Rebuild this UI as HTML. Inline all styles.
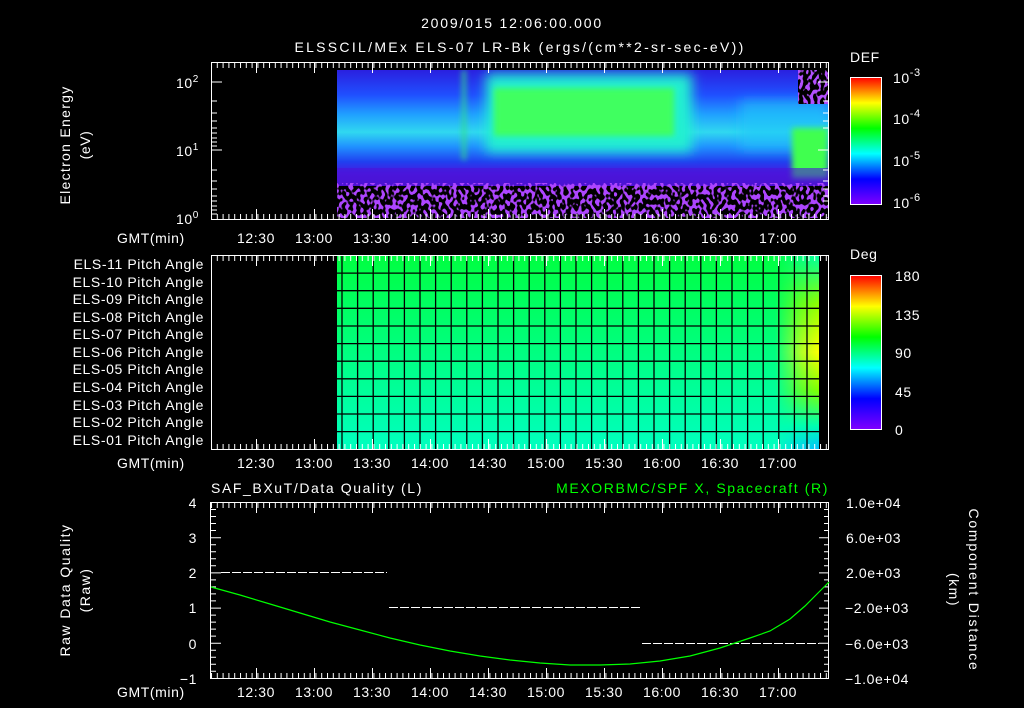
<!DOCTYPE html>
<html><head><meta charset="utf-8"><style>
html,body{margin:0;padding:0;background:#000;width:1024px;height:708px;overflow:hidden}
svg{display:block}
text{font-family:"Liberation Sans",sans-serif;fill:#fff;font-size:14px;letter-spacing:0.6px}
</style></head><body>
<svg width="1024" height="708" viewBox="0 0 1024 708" xmlns="http://www.w3.org/2000/svg">
<defs>
<pattern id="tk" patternUnits="userSpaceOnUse" x="211" y="0" width="5.8" height="10"><rect x="0" y="0" width="1" height="10" fill="#fff"/></pattern>
<pattern id="tkM" patternUnits="userSpaceOnUse" x="256" y="0" width="58" height="20"><rect x="0" y="0" width="1" height="20" fill="#fff"/></pattern>
<linearGradient id="spec" x1="0" y1="0" x2="0" y2="1">
<stop offset="0" stop-color="#2a20e0"/><stop offset="0.17" stop-color="#2050ff"/><stop offset="0.3" stop-color="#20a0ff"/><stop offset="0.42" stop-color="#30d8f0"/><stop offset="0.52" stop-color="#2090ff"/><stop offset="0.62" stop-color="#2040f0"/><stop offset="0.7" stop-color="#4a18e0"/><stop offset="0.78" stop-color="#5010c8"/><stop offset="1" stop-color="#1c0050"/>
</linearGradient>
<linearGradient id="cbTop" x1="0" y1="1" x2="0" y2="0">
<stop offset="0" stop-color="#8000ff"/><stop offset="0.2" stop-color="#0000ff"/><stop offset="0.4" stop-color="#00ffff"/><stop offset="0.6" stop-color="#00ff00"/><stop offset="0.8" stop-color="#ffff00"/><stop offset="1" stop-color="#ff0000"/>
</linearGradient>
<linearGradient id="pa" x1="0" y1="0" x2="0" y2="1"><stop offset="0" stop-color="#00ff40"/><stop offset="1" stop-color="#00ffc0"/></linearGradient>
<linearGradient id="paR" x1="0" y1="0" x2="0" y2="1"><stop offset="0" stop-color="#00ffa0"/><stop offset="0.25" stop-color="#90ff00"/><stop offset="0.5" stop-color="#ffff00"/><stop offset="0.7" stop-color="#80ff00"/><stop offset="0.88" stop-color="#00ffb0"/><stop offset="1" stop-color="#00c0ff"/></linearGradient>
<linearGradient id="fadeH" x1="0" y1="0" x2="1" y2="0"><stop offset="0" stop-color="#fff" stop-opacity="0"/><stop offset="0.6" stop-color="#fff" stop-opacity="0.7"/><stop offset="1" stop-color="#fff" stop-opacity="1"/></linearGradient>
<mask id="mH"><rect x="775" y="255" width="44" height="194" fill="url(#fadeH)"/></mask>
<clipPath id="cs"><rect x="337" y="70" width="491" height="148"/></clipPath>
<filter id="bl" filterUnits="userSpaceOnUse" x="300" y="40" width="600" height="220"><feGaussianBlur stdDeviation="6"/></filter>
<filter id="bl2" filterUnits="userSpaceOnUse" x="300" y="40" width="600" height="220"><feGaussianBlur stdDeviation="3"/></filter>
<filter id="sp" filterUnits="userSpaceOnUse" x="337" y="183" width="491" height="35">
<feTurbulence type="fractalNoise" baseFrequency="0.28 0.2" numOctaves="1" seed="7"/>
<feColorMatrix type="matrix" values="0 0 0 0 0.42  0 0 0 0 0.06  0 0 0 0 1  14 0 0 0 -6.9"/>
</filter>
<filter id="sp2" filterUnits="userSpaceOnUse" x="798" y="70" width="30" height="34">
<feTurbulence type="fractalNoise" baseFrequency="0.28 0.2" numOctaves="1" seed="3"/>
<feColorMatrix type="matrix" values="0 0 0 0 0.45  0 0 0 0 0.08  0 0 0 0 1  14 0 0 0 -7.0"/>
</filter>
</defs>

<text x="512" y="28" text-anchor="middle" font-size="16" style="letter-spacing:1.8px">2009/015 12:06:00.000</text>
<text x="520" y="52" text-anchor="middle" font-size="16" style="letter-spacing:2.3px">ELSSCIL/MEx ELS-07 LR-Bk  (ergs/(cm**2-sr-sec-eV))</text>

<!-- top spectrogram -->
<g clip-path="url(#cs)">
<rect x="337" y="70" width="491" height="148" fill="url(#spec)"/>
<g filter="url(#bl)">
<rect x="486" y="74" width="206" height="78" fill="#20f0d0"/>
<rect x="740" y="100" width="88" height="50" fill="#20c8f8" opacity="0.6"/>
</g>
<g filter="url(#bl2)">
<rect x="494" y="88" width="180" height="48" fill="#40ff60"/>
<rect x="462" y="70" width="4" height="90" fill="#30e080" opacity="0.8"/>
<rect x="792" y="128" width="36" height="50" fill="#40ff50"/>
</g>
<rect x="798" y="70" width="30" height="34" fill="#000"/>
<rect x="798" y="70" width="30" height="34" filter="url(#sp2)"/>
<rect x="337" y="168" width="491" height="18" fill="#4a14d8" opacity="0.6"/>
<rect x="337" y="186" width="491" height="32" fill="#000"/>
<rect x="337" y="183" width="491" height="35" filter="url(#sp)"/>
</g>
<!-- top frame -->
<rect x="211.5" y="62.5" width="617" height="157" fill="none" stroke="#fff"/>
<rect x="211" y="63" width="618" height="5" fill="url(#tk)"/>
<rect x="211" y="63" width="618" height="10" fill="url(#tkM)"/>
<rect x="211" y="214" width="618" height="5" fill="url(#tk)"/>
<rect x="211" y="209" width="618" height="10" fill="url(#tkM)"/>
<g stroke="#fff"><path d="M212 82h10M212 150h10M212 101h5M212 113h5M212 121h5M212 128h5M212 133h5M212 138h5M212 142h5M212 146h5M212 170h5M212 181h5M212 189h5M212 196h5M212 201h5M212 206h5M212 210h5M212 214h5M818 82h10M818 150h10M823 101h5M823 113h5M823 121h5M823 128h5M823 170h5M823 181h5M823 189h5M823 196h5M823 201h5"/></g>
<text x="176" y="88" font-size="15">10<tspan font-size="10" dy="-6">2</tspan></text>
<text x="176" y="156" font-size="15">10<tspan font-size="10" dy="-6">1</tspan></text>
<text x="176" y="224" font-size="15">10<tspan font-size="10" dy="-6">0</tspan></text>
<text transform="translate(70,145) rotate(-90)" text-anchor="middle" style="letter-spacing:1.3px">Electron Energy</text>
<text transform="translate(90,145) rotate(-90)" text-anchor="middle">(eV)</text>
<text x="850" y="62" font-size="18">DEF</text>
<rect x="850.5" y="77.5" width="31" height="127" fill="url(#cbTop)" stroke="#fff"/>
<text x="893" y="83" font-size="17">10<tspan font-size="11" dy="-7">-3</tspan></text>
<text x="893" y="124" font-size="17">10<tspan font-size="11" dy="-7">-4</tspan></text>
<text x="893" y="166" font-size="17">10<tspan font-size="11" dy="-7">-5</tspan></text>
<text x="893" y="208" font-size="17">10<tspan font-size="11" dy="-7">-6</tspan></text>
<g font-size="14" style="letter-spacing:1px">
<text x="117" y="243">GMT(min)</text>
<text x="256" y="243" text-anchor="middle">12:30</text><text x="314" y="243" text-anchor="middle">13:00</text><text x="372" y="243" text-anchor="middle">13:30</text><text x="430" y="243" text-anchor="middle">14:00</text><text x="488" y="243" text-anchor="middle">14:30</text><text x="546" y="243" text-anchor="middle">15:00</text><text x="604" y="243" text-anchor="middle">15:30</text><text x="662" y="243" text-anchor="middle">16:00</text><text x="720" y="243" text-anchor="middle">16:30</text><text x="778" y="243" text-anchor="middle">17:00</text>
</g>

<!-- middle panel -->
<rect x="337" y="255" width="482" height="194" fill="url(#pa)"/>
<rect x="775" y="255" width="44" height="194" fill="url(#paR)" mask="url(#mH)"/>
<g stroke="#000" stroke-width="1.3">
<path d="M337 273.1H819M337 290.7H819M337 308.3H819M337 326H819M337 343.6H819M337 361.2H819M337 378.8H819M337 396.4H819M337 414H819M337 431.6H819"/>
<path d="M342 255V449M357.6 255V449M373.2 255V449M388.8 255V449M404.4 255V449M420 255V449M435.6 255V449M451.2 255V449M466.8 255V449M482.4 255V449M498 255V449M513.6 255V449M529.2 255V449M544.8 255V449M560.4 255V449M576 255V449M591.6 255V449M607.2 255V449M622.8 255V449M638.4 255V449M654 255V449M669.6 255V449M685.2 255V449M700.8 255V449M716.4 255V449M732 255V449M747.6 255V449M763.2 255V449M778.8 255V449M794.4 255V449M807 255V449"/>
</g>
<rect x="211.5" y="255.5" width="617" height="194" fill="none" stroke="#fff"/>
<rect x="211" y="256" width="618" height="5" fill="url(#tk)"/>
<rect x="211" y="256" width="618" height="10" fill="url(#tkM)"/>
<rect x="211" y="444" width="618" height="5" fill="url(#tk)"/>
<rect x="211" y="439" width="618" height="10" fill="url(#tkM)"/>
<g text-anchor="end" font-size="13" style="letter-spacing:1.3px">
<text x="204" y="269">ELS-11 Pitch Angle</text><text x="204" y="287">ELS-10 Pitch Angle</text><text x="204" y="304">ELS-09 Pitch Angle</text><text x="204" y="322">ELS-08 Pitch Angle</text><text x="204" y="339">ELS-07 Pitch Angle</text><text x="204" y="357">ELS-06 Pitch Angle</text><text x="204" y="374">ELS-05 Pitch Angle</text><text x="204" y="392">ELS-04 Pitch Angle</text><text x="204" y="410">ELS-03 Pitch Angle</text><text x="204" y="427">ELS-02 Pitch Angle</text><text x="204" y="445">ELS-01 Pitch Angle</text>
</g>
<text x="850" y="259" font-size="18">Deg</text>
<rect x="850.5" y="275.5" width="31" height="154" fill="url(#cbTop)" stroke="#fff"/>
<g font-size="17"><text x="895" y="281">180</text><text x="895" y="320">135</text><text x="895" y="358">90</text><text x="895" y="397">45</text><text x="895" y="435">0</text></g>
<g font-size="14" style="letter-spacing:1px">
<text x="117" y="468">GMT(min)</text>
<text x="256" y="468" text-anchor="middle">12:30</text><text x="314" y="468" text-anchor="middle">13:00</text><text x="372" y="468" text-anchor="middle">13:30</text><text x="430" y="468" text-anchor="middle">14:00</text><text x="488" y="468" text-anchor="middle">14:30</text><text x="546" y="468" text-anchor="middle">15:00</text><text x="604" y="468" text-anchor="middle">15:30</text><text x="662" y="468" text-anchor="middle">16:00</text><text x="720" y="468" text-anchor="middle">16:30</text><text x="778" y="468" text-anchor="middle">17:00</text>
</g>

<!-- bottom panel -->
<text x="211" y="493" font-size="16" style="letter-spacing:1.6px">SAF_BXuT/Data Quality (L)</text>
<text x="829" y="493" font-size="16" text-anchor="end" style="fill:#00ff00;letter-spacing:1.6px">MEXORBMC/SPF X, Spacecraft (R)</text>
<rect x="210.5" y="502.5" width="618" height="176" fill="none" stroke="#fff"/>
<rect x="211" y="503" width="618" height="5" fill="url(#tk)"/>
<rect x="211" y="503" width="618" height="10" fill="url(#tkM)"/>
<rect x="211" y="673" width="618" height="5" fill="url(#tk)"/>
<rect x="211" y="668" width="618" height="10" fill="url(#tkM)"/>
<g stroke="#fff"><path d="M211 537.7h10M211 572.9h10M211 608.1h10M211 643.3h10M211 509.5h5M211 516.5h5M211 523.5h5M211 530.5h5M211 544.7h5M211 551.7h5M211 558.7h5M211 565.7h5M211 579.9h5M211 586.9h5M211 593.9h5M211 600.9h5M211 615.1h5M211 622.1h5M211 629.1h5M211 636.1h5M211 650.3h5M211 657.3h5M211 664.3h5M211 671.3h5M819 537.7h10M819 572.9h10M819 608.1h10M819 643.3h10M824 509.5h5M824 516.5h5M824 523.5h5M824 530.5h5M824 544.7h5M824 551.7h5M824 558.7h5M824 565.7h5M824 579.9h5M824 586.9h5M824 593.9h5M824 600.9h5M824 615.1h5M824 622.1h5M824 629.1h5M824 636.1h5M824 650.3h5M824 657.3h5M824 664.3h5M824 671.3h5"/></g>
<g stroke="#fff" stroke-dasharray="9,2" stroke-width="1"><path d="M221 572.5H387M389 607.5H640M642 643.5H819"/></g>
<polyline fill="none" stroke="#00ff00" stroke-width="1.2" points="211,587 240,595 270,604 300,613 330,622 360,630 390,638 420,645 450,651 480,656 510,660 540,663 570,665 600,665 630,664 660,661 690,656 720,648 750,638 770,631 790,619 805,606 818,593 829,582"/>
<g font-size="15" text-anchor="end"><text x="197" y="508">4</text><text x="197" y="543">3</text><text x="197" y="578">2</text><text x="197" y="613">1</text><text x="197" y="649">0</text><text x="197" y="684">−1</text></g>
<g font-size="14" style="letter-spacing:0.4px"><text x="846" y="508">1.0e+04</text><text x="846" y="543">6.0e+03</text><text x="846" y="578">2.0e+03</text><text x="845" y="613">−2.0e+03</text><text x="845" y="649">−6.0e+03</text><text x="845" y="684">−1.0e+04</text></g>
<text transform="translate(70,590) rotate(-90)" text-anchor="middle" style="letter-spacing:1.5px">Raw Data Quality</text>
<text transform="translate(90,590) rotate(-90)" text-anchor="middle" style="letter-spacing:1.5px">(Raw)</text>
<text transform="translate(969,590) rotate(90)" text-anchor="middle" style="letter-spacing:1.8px">Component Distance</text>
<text transform="translate(949,590) rotate(90)" text-anchor="middle" style="letter-spacing:1.5px">(km)</text>
<g font-size="14" style="letter-spacing:1px">
<text x="117" y="697">GMT(min)</text>
<text x="256" y="697" text-anchor="middle">12:30</text><text x="314" y="697" text-anchor="middle">13:00</text><text x="372" y="697" text-anchor="middle">13:30</text><text x="430" y="697" text-anchor="middle">14:00</text><text x="488" y="697" text-anchor="middle">14:30</text><text x="546" y="697" text-anchor="middle">15:00</text><text x="604" y="697" text-anchor="middle">15:30</text><text x="662" y="697" text-anchor="middle">16:00</text><text x="720" y="697" text-anchor="middle">16:30</text><text x="778" y="697" text-anchor="middle">17:00</text>
</g>
</svg>
</body></html>
